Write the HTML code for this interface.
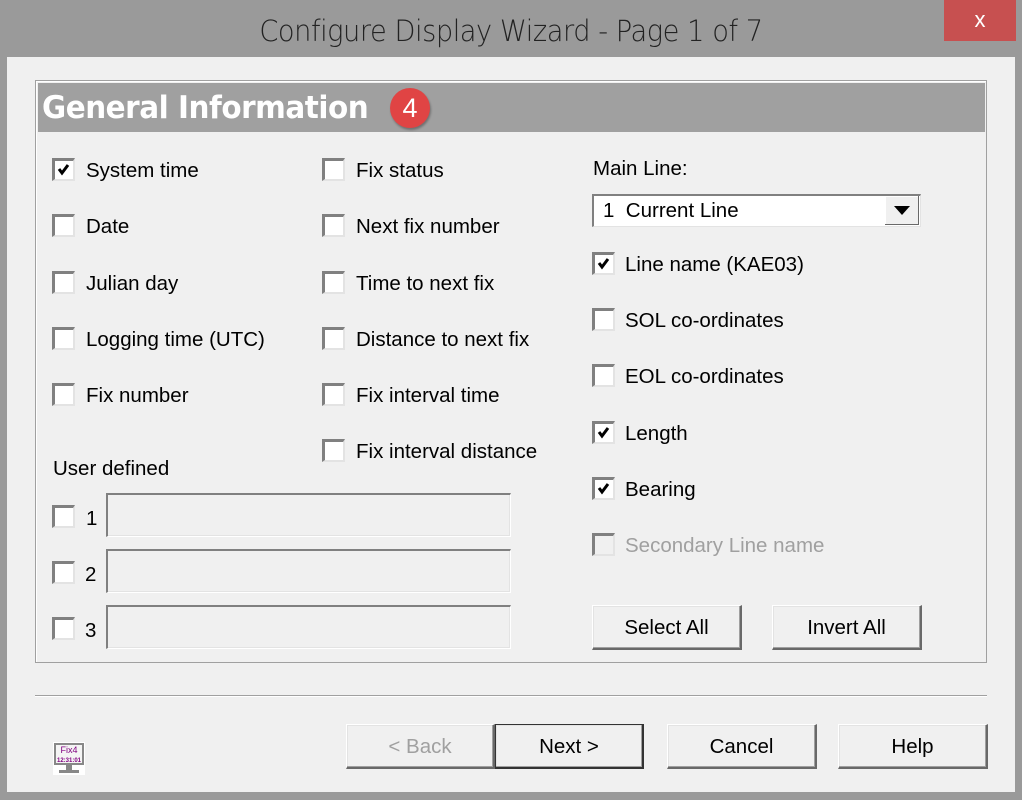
<!DOCTYPE html>
<html><head><style>
*{margin:0;padding:0;box-sizing:border-box}
body{width:1022px;height:800px;background:#9a9a9a;position:relative;overflow:hidden;font-family:"Liberation Sans",Arial,sans-serif;font-size:20.5px;color:#000}
.a{position:absolute}
.title{left:0;top:14px;width:1022px;text-align:center;font-size:29px;color:#222;font-family:"DejaVu Sans","Liberation Sans",sans-serif;font-weight:300;letter-spacing:-0.5px;transform:scaleX(0.94)}
.close{left:944px;top:0;width:72px;height:41px;background:#c75050;color:#fff;font-size:22px;text-align:center;line-height:40px}
.client{left:7px;top:57px;width:1008px;height:735px;background:#f0f0f0}
.grp{left:35px;top:80px;width:952px;height:583px;border:1px solid #a0a0a0;box-shadow:inset 1px 1px 0 #fff}
.hdr{left:38px;top:83px;width:947px;height:49px;background:#a0a0a0}
.hdr span{position:absolute;left:4px;top:7px;color:#fff;font-weight:bold;font-size:31px;font-family:"DejaVu Sans","Liberation Sans",sans-serif;transform:scaleX(0.95);transform-origin:left;letter-spacing:-0.5px}
.badge{left:390px;top:88px;width:40px;height:40px;border-radius:50%;background:#e04444;color:#fff;font-size:27px;text-align:center;line-height:40px;box-shadow:1px 2px 2px rgba(0,0,0,.3)}
.cb{width:23px;height:23px;background:#fff;border-top:3px solid #808080;border-left:3px solid #808080;border-right:2px solid #e3e3e3;border-bottom:2px solid #e3e3e3}
.cb svg{position:absolute;left:2px;top:2px}
.lbl{white-space:nowrap;line-height:22px;margin-top:1px}
.tb{border-top:2px solid #808080;border-left:2px solid #808080;border-right:1px solid #fff;border-bottom:1px solid #fff;background:#f0f0f0;box-shadow:inset -1px -1px 0 #e3e3e3}
.btn{background:#f0f0f0;border:1px solid #fff;border-right:2px solid #696969;border-bottom:2px solid #696969;box-shadow:inset -1px -1px 0 #a0a0a0,inset 1px 1px 0 #e3e3e3;text-align:center;line-height:43px}
.sep{left:35px;top:695px;width:952px;height:2px;border-top:1px solid #a0a0a0;border-bottom:1px solid #fff}
</style></head><body>
<div class="a title">Configure Display Wizard - Page 1 of 7</div>
<div class="a close">x</div>
<div class="a client"></div>
<div class="a grp"></div>
<div class="a hdr"><span>General Information</span></div>
<div class="a badge">4</div>

<div class="a cb" style="left:52px;top:158px"><svg width="14" height="14" viewBox="0 0 14 14"><path d="M2 6 L5 10 L11 2" stroke="#000" stroke-width="3" fill="none"/></svg></div>
<div class="a lbl" style="left:86px;top:159px">System time</div>
<div class="a cb" style="left:52px;top:214px"></div><div class="a lbl" style="left:86px;top:215px">Date</div>
<div class="a cb" style="left:52px;top:271px"></div><div class="a lbl" style="left:86px;top:272px">Julian day</div>
<div class="a cb" style="left:52px;top:327px"></div><div class="a lbl" style="left:86px;top:328px">Logging time (UTC)</div>
<div class="a cb" style="left:52px;top:383px"></div><div class="a lbl" style="left:86px;top:384px">Fix number</div>
<div class="a lbl" style="left:53px;top:457px">User defined</div>
<div class="a cb" style="left:52px;top:505px"></div><div class="a lbl" style="left:86px;top:507px">1</div>
<div class="a tb" style="left:106px;top:493px;width:405px;height:44px"></div>
<div class="a cb" style="left:52px;top:561px"></div><div class="a lbl" style="left:85px;top:563px">2</div>
<div class="a tb" style="left:106px;top:549px;width:405px;height:44px"></div>
<div class="a cb" style="left:52px;top:617px"></div><div class="a lbl" style="left:85px;top:619px">3</div>
<div class="a tb" style="left:106px;top:605px;width:405px;height:44px"></div>

<div class="a cb" style="left:322px;top:158px"></div><div class="a lbl" style="left:356px;top:159px">Fix status</div>
<div class="a cb" style="left:322px;top:214px"></div><div class="a lbl" style="left:356px;top:215px">Next fix number</div>
<div class="a cb" style="left:322px;top:271px"></div><div class="a lbl" style="left:356px;top:272px">Time to next fix</div>
<div class="a cb" style="left:322px;top:327px"></div><div class="a lbl" style="left:356px;top:328px">Distance to next fix</div>
<div class="a cb" style="left:322px;top:383px"></div><div class="a lbl" style="left:356px;top:384px">Fix interval time</div>
<div class="a cb" style="left:322px;top:439px"></div><div class="a lbl" style="left:356px;top:440px">Fix interval distance</div>

<div class="a lbl" style="left:593px;top:157px">Main Line:</div>
<div class="a" style="left:592px;top:194px;width:329px;height:33px;background:#fff;border-top:2px solid #808080;border-left:2px solid #808080;border-right:1px solid #e3e3e3;border-bottom:1px solid #e3e3e3"></div>
<div class="a lbl" style="left:603px;top:199px">1&nbsp; Current Line</div>
<div class="a" style="left:885px;top:196px;width:34px;height:29px;background:#f0f0f0;border-right:1px solid #696969;border-bottom:1px solid #696969;box-shadow:inset 1px 1px 0 #fff"><svg class="a" style="left:9px;top:10px" width="16" height="9"><path d="M0 0H16L8 9Z" fill="#000"/></svg></div>
<div class="a cb" style="left:592px;top:252px"><svg width="14" height="14" viewBox="0 0 14 14"><path d="M2 6 L5 10 L11 2" stroke="#000" stroke-width="3" fill="none"/></svg></div><div class="a lbl" style="left:625px;top:253px">Line name (KAE03)</div>
<div class="a cb" style="left:592px;top:308px"></div><div class="a lbl" style="left:625px;top:309px">SOL co-ordinates</div>
<div class="a cb" style="left:592px;top:364px"></div><div class="a lbl" style="left:625px;top:365px">EOL co-ordinates</div>
<div class="a cb" style="left:592px;top:421px"><svg width="14" height="14" viewBox="0 0 14 14"><path d="M2 6 L5 10 L11 2" stroke="#000" stroke-width="3" fill="none"/></svg></div><div class="a lbl" style="left:625px;top:422px">Length</div>
<div class="a cb" style="left:592px;top:477px"><svg width="14" height="14" viewBox="0 0 14 14"><path d="M2 6 L5 10 L11 2" stroke="#000" stroke-width="3" fill="none"/></svg></div><div class="a lbl" style="left:625px;top:478px">Bearing</div>
<div class="a cb" style="left:592px;top:533px;background:#f0f0f0"></div><div class="a lbl" style="left:625px;top:534px;color:#a0a0a0">Secondary Line name</div>
<div class="a btn" style="left:592px;top:605px;width:150px;height:45px">Select All</div>
<div class="a btn" style="left:772px;top:605px;width:150px;height:45px">Invert All</div>

<div class="a sep"></div>
<div class="a btn" style="left:346px;top:724px;width:149px;height:45px;color:#a0a0a0">&lt; Back</div>
<div class="a btn" style="left:495px;top:724px;width:149px;height:45px;border:1px solid #333;border-right:2px solid #333;border-bottom:2px solid #333">Next &gt;</div>
<div class="a btn" style="left:667px;top:724px;width:150px;height:45px">Cancel</div>
<div class="a btn" style="left:838px;top:724px;width:150px;height:45px">Help</div>

<div class="a" style="left:53px;top:742px;width:32px;height:33px;background:#fff">
 <div class="a" style="left:1px;top:1px;width:30px;height:22px;border:2px solid #888;background:#f4f4f4;color:#800080;font-size:9px;line-height:9px;text-align:center;padding-top:1px">Fix4<br><span style="font-size:6px;font-weight:bold">12:31:01</span></div>
 <div class="a" style="left:13px;top:23px;width:6px;height:5px;background:#888"></div>
 <div class="a" style="left:6px;top:28px;width:20px;height:3px;background:#888"></div>
</div>
</body></html>
